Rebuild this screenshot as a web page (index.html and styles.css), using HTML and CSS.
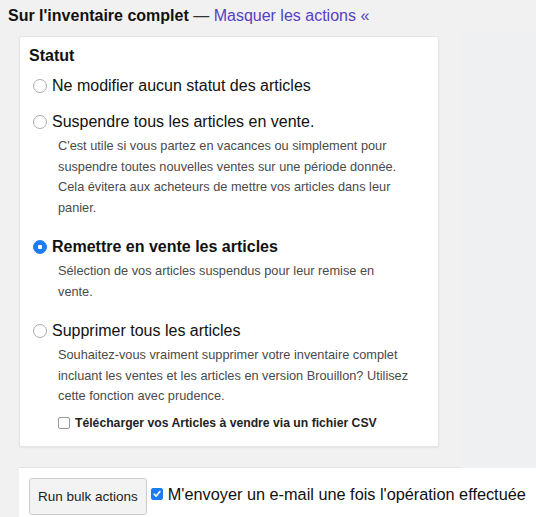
FILE: index.html
```html
<!DOCTYPE html>
<html lang="fr">
<head>
    <meta charset="UTF-8">
    <meta name="viewport" content="width=device-width, initial-scale=1.0">
    <title>Actions groupées</title>
    <link rel="stylesheet" href="styles.css">
</head>
<body>
    <div class="header">
        <strong>Sur l'inventaire complet</strong> <span class="dash">—</span> <a href="#">Masquer les actions «</a>
    </div>
    <div class="main">
        <div class="card">
            <h3>Statut</h3>
            <div class="option">
                <label class="opt-label"><span class="radio"></span>Ne modifier aucun statut des articles</label>
            </div>
            <div class="option">
                <label class="opt-label"><span class="radio"></span>Suspendre tous les articles en vente.</label>
                <p class="desc">C'est utile si vous partez en vacances ou simplement pour<br>suspendre toutes nouvelles ventes sur une période donnée.<br>Cela évitera aux acheteurs de mettre vos articles dans leur<br>panier.</p>
            </div>
            <div class="option">
                <label class="opt-label selected"><span class="radio checked"></span>Remettre en vente les articles</label>
                <p class="desc">Sélection de vos articles suspendus pour leur remise en<br>vente.</p>
            </div>
            <div class="option last">
                <label class="opt-label"><span class="radio"></span>Supprimer tous les articles</label>
                <p class="desc">Souhaitez-vous vraiment supprimer votre inventaire complet<br>incluant les ventes et les articles en version Brouillon? Utilisez<br>cette fonction avec prudence.</p>
                <label class="csv"><span class="box"></span>Télécharger vos Articles à vendre via un fichier CSV</label>
            </div>
        </div>
        <div class="side"></div>
    </div>
    <div class="footer">
        <button class="run">Run bulk actions</button>
        <label class="notify">
            <span class="box checked">
                <svg width="8" height="8" viewBox="0 0 8 8"><path d="M1.2 4.2 L3.2 6.1 L6.9 1.6" fill="none" stroke="#fff" stroke-width="1.6" stroke-linecap="round" stroke-linejoin="round"/></svg>
            </span>M'envoyer un e-mail une fois l'opération effectuée
        </label>
    </div>
</body>
</html>
```

FILE: styles.css
```css
body {
    font-family: "Liberation Sans", Arial, sans-serif;
    margin: 0;
    background-color: #f1f1f1;
    color: #111;
    width: 536px;
    height: 517px;
    overflow: hidden;
}
.header {
    font-size: 16px;
    line-height: 20px;
    padding: 6px 8px 0;
    height: 24px;
    white-space: nowrap;
}
.header .dash {
    color: #333;
}
.header a {
    color: #553fc4;
    text-decoration: none;
}
.main {
    display: flex;
    align-items: flex-start;
    padding-left: 19px;
    height: 437px;
}
.card {
    width: 400px;
    margin-top: 6px;
    background: #fff;
    border: 1px solid #e4e4e4;
    border-radius: 2px;
    box-shadow: 0 1px 2px rgba(0, 0, 0, 0.06);
    padding: 9px 9px 13px;
}
.card h3 {
    margin: 0 0 10px;
    font-size: 16px;
    line-height: 20px;
}
.side {
    margin-left: 22px;
    margin-top: 2px;
    flex: 1;
    height: 436px;
    background: #eef0f1;
}
.option {
    display: flow-root;
    margin-bottom: 16px;
}
.option.last {
    margin-bottom: 0;
}
.opt-label {
    display: flex;
    align-items: center;
    font-size: 16px;
    line-height: 20px;
    padding-left: 4px;
}
.opt-label.selected {
    font-weight: bold;
}
.radio {
    width: 12px;
    height: 12px;
    border: 1px solid #aaa;
    border-radius: 50%;
    margin-right: 5px;
    box-sizing: content-box;
    background: #fff;
    flex: none;
}
.radio.checked {
    border-color: #1c7cf4;
    background: radial-gradient(circle, #fff 0, #fff 2px, #1c7cf4 2.5px);
}
.desc {
    margin: 4px 0 3px 29px;
    font-size: 12.75px;
    line-height: 20.5px;
    color: #4a4a4a;
    white-space: nowrap;
}
.last .desc {
    margin-bottom: 6px;
}
.csv {
    display: flex;
    align-items: center;
    margin: 0 0 0 29px;
    font-size: 12.2px;
    line-height: 20px;
    font-weight: bold;
    color: #222;
}
.box {
    width: 10px;
    height: 10px;
    border: 1px solid #999;
    border-radius: 2px;
    margin-right: 5px;
    display: inline-flex;
    align-items: center;
    justify-content: center;
    flex: none;
}
.box.checked {
    background: #1c7cf4;
    border-color: #1c7cf4;
}
.footer {
    margin-left: 19px;
    background: #fff;
    border-top: 1px solid #e4e4e4;
    padding: 10px 10px 0;
    display: flex;
    align-items: center;
    height: 60px;
    box-sizing: border-box;
}
.run {
    font-family: "Liberation Sans", Arial, sans-serif;
    font-size: 13.5px;
    color: #222;
    background: #f3f3f3;
    border: 1px solid #ccc;
    border-radius: 3px;
    padding: 0 8px;
    height: 37px;
    margin-right: 4px;
    align-self: flex-start;
}
.notify {
    display: flex;
    align-items: center;
    font-size: 16.3px;
    white-space: nowrap;
    margin-top: -2px;
    align-self: flex-start;
    line-height: 36px;
}
```
